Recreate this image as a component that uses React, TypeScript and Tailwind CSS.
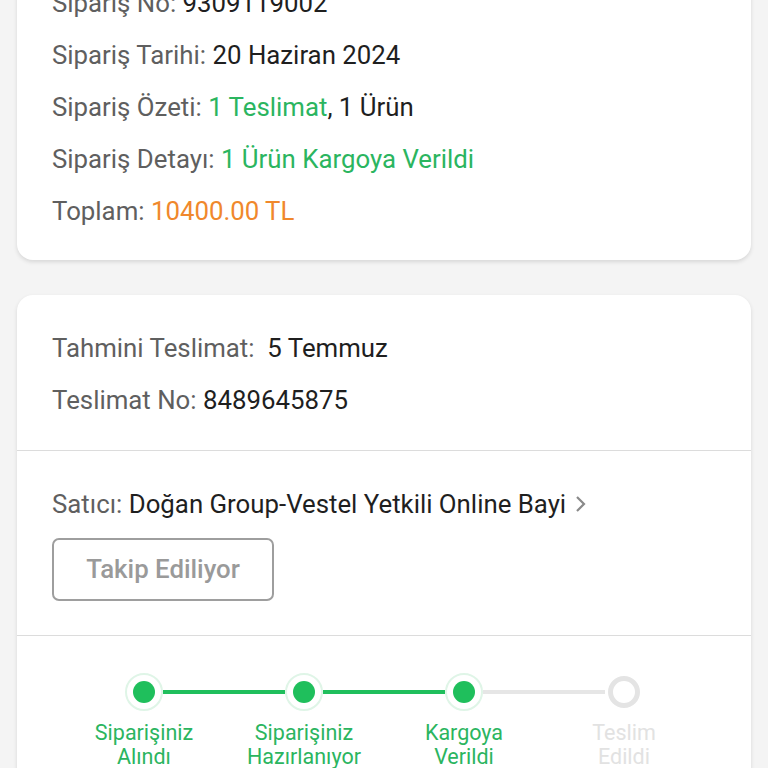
import React from "react";

const Line = ({ children }: { children: React.ReactNode }) => (
  <div className="h-[52px] leading-[52px] whitespace-nowrap">{children}</div>
);

const L = ({ children }: { children: React.ReactNode }) => (
  <span className="text-[#5f5f5f]">{children}</span>
);
const V = ({ children }: { children: React.ReactNode }) => (
  <span className="text-[#1f1f1f]">{children}</span>
);

const steps = [
  { l1: "Siparişiniz", l2: "Alındı", done: true },
  { l1: "Siparişiniz", l2: "Hazırlanıyor", done: true },
  { l1: "Kargoya", l2: "Verildi", done: true },
  { l1: "Teslim", l2: "Edildi", done: false },
];

export default function App() {
  return (
    <div
      className="w-[768px] h-[768px] overflow-hidden bg-[#f4f4f4] text-[25.8px]"
      style={{ fontFamily: "Roboto, 'Noto Sans', sans-serif" }}
    >
      <div className="px-[17px] -mt-[23px]">
        <div className="bg-white rounded-[16px] shadow-[0_2px_4px_rgba(0,0,0,0.12)] px-[35px] pb-[23px]">
          <Line>
            <L>Sipariş No: </L>
            <V>9309119002</V>
          </Line>
          <Line>
            <L>Sipariş Tarihi: </L>
            <V>20 Haziran 2024</V>
          </Line>
          <Line>
            <L>Sipariş Özeti: </L>
            <span className="text-[#2bb55f]">1 Teslimat</span>
            <V>, 1 Ürün</V>
          </Line>
          <Line>
            <L>Sipariş Detayı: </L>
            <span className="text-[#2bb55f]">1 Ürün Kargoya Verildi</span>
          </Line>
          <Line>
            <L>Toplam: </L>
            <span className="text-[#f0882c]">10400.00 TL</span>
          </Line>
        </div>

        <div className="mt-[35px] bg-white rounded-t-[16px] shadow-[0_2px_4px_rgba(0,0,0,0.12)]">
          <div className="px-[35px] pt-[27px] pb-[24px] border-b border-[#dcdcdc]">
            <Line>
              <L>Tahmini Teslimat: </L>
              <V>&nbsp;5 Temmuz</V>
            </Line>
            <Line>
              <L>Teslimat No: </L>
              <V>8489645875</V>
            </Line>
          </div>
          <div className="px-[35px] pt-[27px] pb-[34px] border-b border-[#dcdcdc]">
            <div className="h-[52px] flex items-center whitespace-nowrap">
              <L>Satıcı:&nbsp;</L>
              <V>Doğan Group-Vestel Yetkili Online Bayi</V>
              <svg width="14" height="20" viewBox="0 0 14 20" className="ml-[8px]">
                <path d="M3 3 L10 10 L3 17" fill="none" stroke="#8a8a8a" strokeWidth="2.2" />
              </svg>
            </div>
            <div className="mt-[8px] w-[222px] h-[63px] border-2 border-[#9e9e9e] rounded-[7px] flex items-center justify-center text-[#9a9a9a] font-medium">
              Takip Ediliyor
            </div>
          </div>
          <div className="px-[47px] pt-[36px] pb-[20px] grid grid-cols-4">
            {steps.map((s, i) => {
              const leftColor =
                i === 0 ? "bg-transparent" : s.done ? "bg-[#1fbf5c]" : "bg-[#e6e6e6]";
              const next = steps[i + 1];
              const rightColor =
                i === steps.length - 1
                  ? "bg-transparent"
                  : next && next.done
                  ? "bg-[#1fbf5c]"
                  : "bg-[#e6e6e6]";
              return (
                <div key={i} className="flex flex-col items-center">
                  <div className="w-full flex items-center h-[40px]">
                    <div className={`flex-1 h-[4px] ${leftColor}`} />
                    {s.done ? (
                      <div className="w-[38px] h-[38px] rounded-full border-2 border-[#dff5e7] bg-white flex items-center justify-center">
                        <div className="w-[22px] h-[22px] rounded-full bg-[#1fbf5c]" />
                      </div>
                    ) : (
                      <div className="w-[38px] h-[38px] flex items-center justify-center">
                        <div className="w-[32px] h-[32px] rounded-full border-[5px] border-[#e4e4e4] bg-white" />
                      </div>
                    )}
                    <div className={`flex-1 h-[4px] ${rightColor}`} />
                  </div>
                  <div
                    className={`mt-[9px] text-[21.5px] leading-[24px] text-center ${
                      s.done ? "text-[#2bb55f]" : "text-[#e2e2e2]"
                    }`}
                  >
                    <div>{s.l1}</div>
                    <div>{s.l2}</div>
                  </div>
                </div>
              );
            })}
          </div>
        </div>
      </div>
    </div>
  );
}
